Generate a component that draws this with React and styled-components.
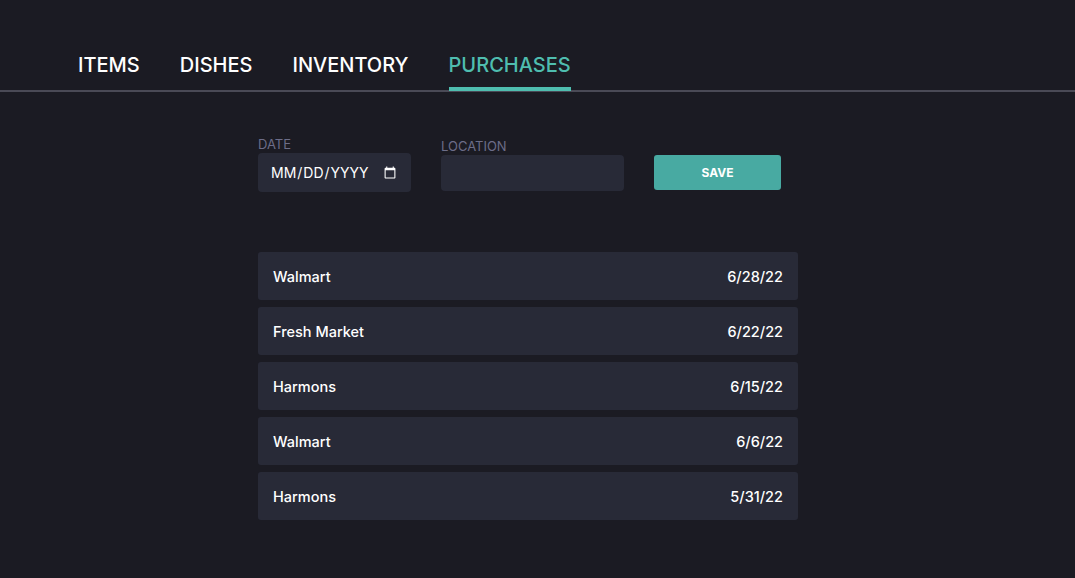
import React from 'react'
import styled, { createGlobalStyle } from 'styled-components'

const GlobalStyle = createGlobalStyle`
html, body {
  margin: 0;
  padding: 0;
  background: #1b1b23;
  font-family: Inter, "Noto Sans", sans-serif;
  color: #ffffff;
}
`

const Page = styled.div`
min-height: 578px;
background: #1b1b23;
padding-top: 40px;
box-sizing: border-box;
`

const TabBar = styled.nav`
display: flex;
gap: 40px;
padding-left: 78px;
border-bottom: 2px solid #4a4a56;
height: 52px;
box-sizing: border-box;
`

const Tab = styled.div`
position: relative;
font-size: 20px;
font-weight: 500;
line-height: 24px;
padding-top: 13px;
color: ${p => (p.active ? '#4fbdaf' : '#ffffff')};

&::after {
  content: '';
  display: ${p => (p.active ? 'block' : 'none')};
  position: absolute;
  left: 0;
  right: 0;
  bottom: -1px;
  height: 4px;
  background: #4fbdaf;
}
`

const Content = styled.div`
width: 540px;
margin-left: 258px;
padding-top: 45px;
`

const Form = styled.div`
display: flex;
align-items: flex-end;
gap: 30px;
`

const Field = styled.label`
display: flex;
flex-direction: column;
gap: 2px;
`

const Label = styled.span`
font-size: 13px;
line-height: 14px;
color: #6c6d88;
text-transform: uppercase;
`

const Input = styled.input`
width: ${p => p.w}px;
height: ${p => p.h}px;
box-sizing: border-box;
background: #282a37;
border: none;
border-radius: 4px;
color: #ffffff;
color-scheme: dark;
font-family: Inter, "Noto Sans", sans-serif;
font-size: 14px;
text-transform: uppercase;
padding: 0 12px;
outline: none;
margin-bottom: ${p => p.mb || 0}px;
`

const SaveButton = styled.button`
width: 127px;
height: 35px;
margin-bottom: 2px;
background: #48aaa2;
border: none;
border-radius: 3px;
color: #ffffff;
font-family: Inter, "Noto Sans", sans-serif;
font-size: 12px;
font-weight: 700;
`

const List = styled.div`
margin-top: 60px;
display: flex;
flex-direction: column;
gap: 7px;
`

const Row = styled.div`
height: 48px;
display: flex;
align-items: center;
justify-content: space-between;
padding: 0 15px;
background: #282a37;
border-radius: 3px;
font-size: 14.5px;
font-weight: 500;
`

const purchases = [
  { place: 'Walmart', date: '6/28/22' },
  { place: 'Fresh Market', date: '6/22/22' },
  { place: 'Harmons', date: '6/15/22' },
  { place: 'Walmart', date: '6/6/22' },
  { place: 'Harmons', date: '5/31/22' },
]

function App() {
  return (
    <>
      <GlobalStyle />
      <Page>
        <TabBar>
          <Tab>ITEMS</Tab>
          <Tab>DISHES</Tab>
          <Tab>INVENTORY</Tab>
          <Tab active>PURCHASES</Tab>
        </TabBar>
        <Content>
          <Form>
            <Field>
              <Label>Date</Label>
              <Input type="date" w={153} h={39} />
            </Field>
            <Field>
              <Label>Location</Label>
              <Input type="text" w={183} h={36} mb={1} />
            </Field>
            <SaveButton>SAVE</SaveButton>
          </Form>
          <List>
            {purchases.map((p, i) => (
              <Row key={i}>
                <span>{p.place}</span>
                <span>{p.date}</span>
              </Row>
            ))}
          </List>
        </Content>
      </Page>
    </>
  )
}

export default App
